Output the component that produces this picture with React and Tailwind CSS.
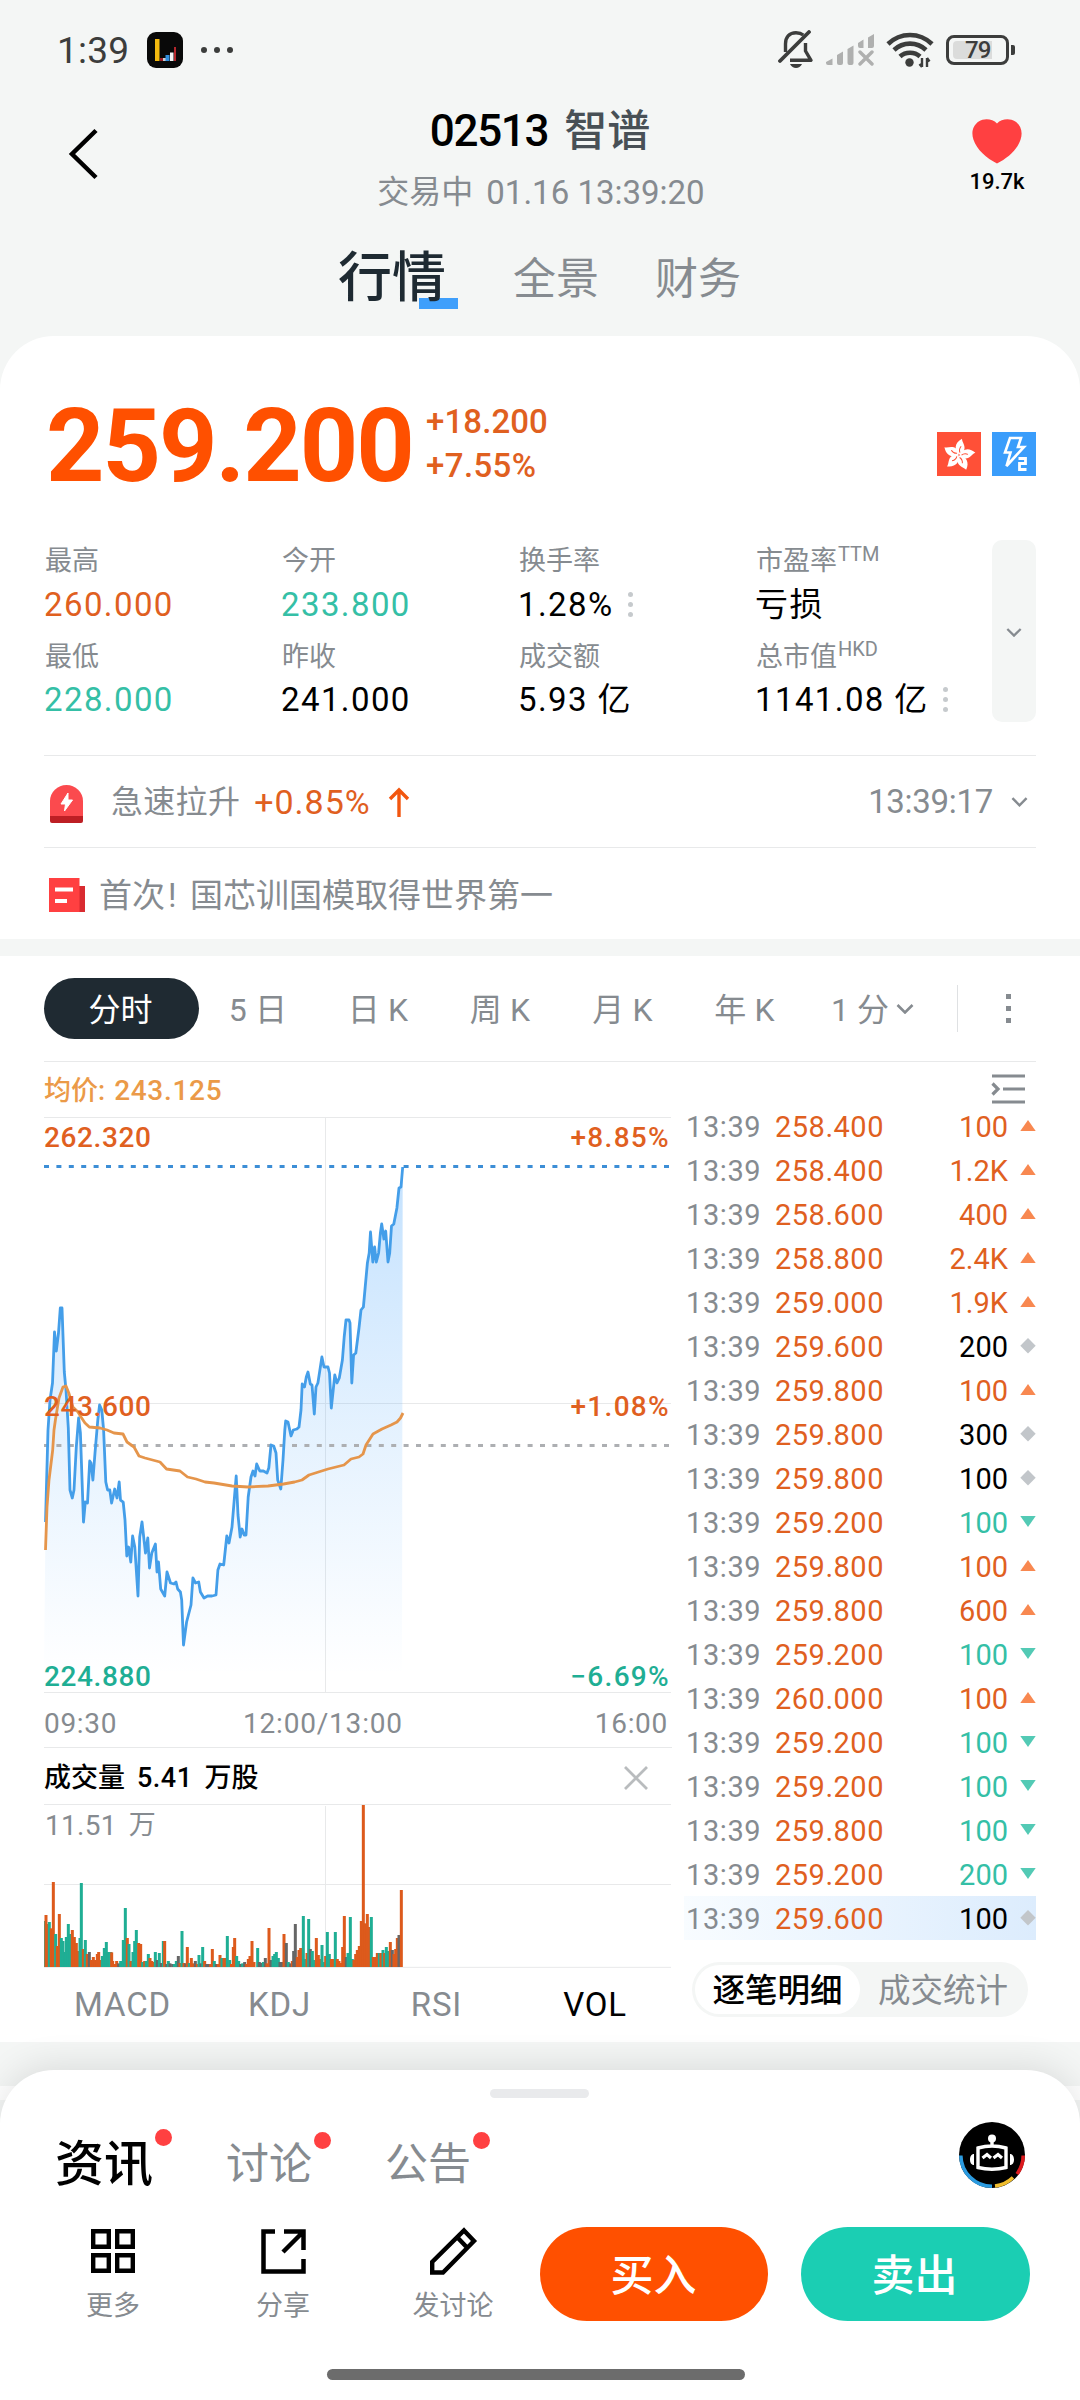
import { useState } from 'react';

const stats = [
  { label: '最高', value: '260.000', tone: 'text-[#e0601f]' },
  { label: '今开', value: '233.800', tone: 'text-[#35bfa6]' },
  { label: '换手率', value: '1.28%', tone: 'text-black', more: true },
  { label: '市盈率', sup: 'TTM', value: '亏损', tone: 'text-black' },
  { label: '最低', value: '228.000', tone: 'text-[#35bfa6]' },
  { label: '昨收', value: '241.000', tone: 'text-black' },
  { label: '成交额', value: '5.93 亿', tone: 'text-black' },
  { label: '总市值', sup: 'HKD', value: '1141.08 亿', tone: 'text-black', more: true },
];

const trades = [
  ['258.400', '100', 'up'],
  ['258.400', '1.2K', 'up'],
  ['258.600', '400', 'up'],
  ['258.800', '2.4K', 'up'],
  ['259.000', '1.9K', 'up'],
  ['259.600', '200', 'flat'],
  ['259.800', '100', 'up'],
  ['259.800', '300', 'flat'],
  ['259.800', '100', 'flat'],
  ['259.200', '100', 'down'],
  ['259.800', '100', 'up'],
  ['259.800', '600', 'up'],
  ['259.200', '100', 'down'],
  ['260.000', '100', 'up'],
  ['259.200', '100', 'down'],
  ['259.200', '100', 'down'],
  ['259.800', '100', 'down'],
  ['259.200', '200', 'down'],
  ['259.600', '100', 'flat'],
];

const periods = [
  { name: '5 日', width: 'w-[118px]' },
  { name: '日 K', width: 'w-[122px]' },
  { name: '周 K', width: 'w-[122px]' },
  { name: '月 K', width: 'w-[123px]' },
  { name: '年 K', width: 'w-[121px]' },
];

const indicators = ['MACD', 'KDJ', 'RSI', 'VOL'];

const pricePoints =
  '45.5,1522 48,1430 50,1400 52.5,1383 54.5,1332 56.3,1351 58.5,1333 60.3,1308 62,1308 64.3,1372 66,1390 68.3,1428 70,1490 72.3,1498 74,1490 76.3,1447 78.6,1418 80.4,1433 83.5,1522 85.3,1502 87.5,1503 89.7,1461 91,1463 92.9,1480 95,1453 97.8,1420 99.6,1405 101.8,1410 103.6,1430 105.8,1482 107.6,1490 109.8,1490 111.6,1503 114.7,1489 117,1498 119.2,1482 120.5,1500 123.2,1502 125,1520 126.8,1556 128.6,1547 130.8,1562 132.6,1536 134.8,1547 138,1596 139.7,1537 142,1522 145.5,1553 147.8,1538 149.5,1568 151.8,1553 155.4,1544 157,1572 158.5,1562 160.7,1589 164.7,1596 167,1572 170.5,1583 174,1584 176,1582 177.7,1589 180.4,1592 181.7,1600 183.5,1645 186.6,1622 191,1605 192.9,1578 195.5,1583 198.7,1582 200.4,1592 204,1598 207.6,1596 212,1596 216,1595 217.9,1570 220,1564 223.7,1565 226.8,1536 229,1543 232,1527 236.2,1476 238,1515 240.2,1537 242,1529 244.2,1535 246,1535 248.2,1497 251,1477 253,1471 255,1476 256.7,1464 259.8,1471 263.4,1471 267,1473 268.8,1468 271,1445 273.7,1446 276,1453 277.7,1480 280.8,1489 283,1460 284.8,1430 285.7,1421 288,1422 291,1436 293.3,1430 296.9,1429 299,1427 301,1410 302.2,1384 304.5,1387 306.3,1377 308,1372 310.3,1384 312,1385 314.3,1414 316,1387 317.9,1383 321.9,1357 324,1367 328,1367 329.5,1373 331.3,1408 334.8,1375 337,1383 339.3,1378 342.4,1360 344.2,1337 346,1320 349,1320 350,1323 351.8,1383 353.6,1355 355.8,1353 359,1328 361,1310 363.4,1307 365.2,1287 367.4,1263 369.2,1253 370.5,1232 372.8,1262 374.6,1247 376.3,1262 378.6,1253 380.4,1233 381.7,1224 383.9,1239 385.7,1231 388,1262 389.7,1253 391.5,1226 393.8,1224 396.9,1208 399,1188 401,1187 402.7,1167';

const averagePoints =
  '45.5,1550 47,1507 49,1480 52.7,1450 54,1430 55.4,1420 59,1398 63,1387 66,1386 68.8,1393 72.8,1407 78,1412 81,1417 85,1423 89.3,1427 100,1428 107,1430 114,1433 123,1434 127,1442 134,1447 139,1456 145,1458 160,1462 166.5,1469 180,1471 187.5,1477 196,1479 205,1482 214,1483 232,1486 248,1487 268,1486 283.5,1484 294.6,1482 302,1480 309,1475 328,1469 344,1465 351,1459 359,1457 363,1454 366,1445 373,1434 382,1429 391,1425 397,1422 400.5,1418 403,1413';

// x, top, tone (o = up, g = down, k = flat), three units to a pixel
const volumeBars =
  '33,363,g 36,345,o 40,372,o 46,366,g 52,385,o 58,246,o 65,402,g 70,438,o 76,342,o 82,414,g 87,423,g 92,456,g 97,411,g 103,372,g 109,402,g 115,390,o 121,411,o 127,429,o 132,453,o 138,414,g 142,249,g 148,447,o 154,420,g 160,462,o 166,456,k 172,480,o 178,471,o 184,480,o 190,462,o 194,456,o 200,480,o 205,468,g 211,444,g 217,426,g 223,456,g 230,456,g 233,457,o 236,483,o 242,492,o 248,483,o 254,490,k 260,483,g 268,420,g 274,324,g 280,414,o 285,432,g 291,483,o 297,456,g 302,423,g 307,390,g 314,429,o 320,432,o 326,486,g 332,483,o 337,483,g 343,462,g 348,474,o 353,483,o 358,486,o 364,456,g 370,480,k 376,459,g 382,489,k 388,423,g 392,423,o 398,492,k 403,483,g 408,490,k 416,492,k 421,492,g 427,483,g 433,468,k 438,489,o 444,393,g 450,489,o 455,490,k 460,441,o 466,489,g 472,474,o 478,490,o 484,483,k 490,492,o 495,465,g 501,490,k 506,441,g 512,483,o 518,492,k 524,492,k 530,492,o 535,447,o 541,483,g 547,492,k 553,492,o 558,465,o 564,474,g 570,474,o 575,474,o 580,408,g 587,480,g 592,492,o 598,441,o 602,414,o 608,468,g 614,483,g 620,492,k 626,490,g 632,486,k 638,492,o 643,477,o 648,468,o 654,423,o 660,486,o 671,444,g 676,486,k 682,489,k 688,486,g 694,474,k 699,490,o 705,384,o 711,480,k 717,468,g 722,462,g 727,456,g 733,474,g 738,486,k 744,486,k 750,402,o 757,429,k 763,486,g 770,490,k 775,483,o 779,453,k 784,372,k 790,471,o 795,450,o 800,444,o 808,348,g 814,477,g 819,459,o 824,357,g 829,447,k 835,453,g 841,480,g 847,414,o 853,465,o 858,477,o 864,435,g 870,486,g 875,468,o 880,396,g 886,462,g 892,477,o 898,477,o 904,396,g 910,477,o 915,483,o 920,489,o 926,441,o 931,348,o 937,471,k 942,459,g 949,351,g 955,477,g 960,480,o 965,462,o 970,450,o 976,438,o 982,363,o 988,15,o 994,370,o 1000,342,o 1005,381,o 1012,351,g 1018,471,o 1024,471,o 1030,459,o 1036,459,g 1041,459,o 1047,450,g 1052,459,o 1057,441,g 1063,453,g 1069,426,o 1075,450,k 1080,462,o 1085,447,o 1090,414,o 1095,405,k 1102,270,o'
    .split(' ')
    .map((bar) => bar.split(','));

const barFill = { o: '#dd5a1c', g: '#1fae94', k: '#666666' };

function ChevronDown({ className }) {
  return (
    <svg className={className} viewBox="0 0 18 10" fill="none" stroke="#868b90" strokeWidth="2.6">
      <path d="M1.5 1 9 8.5 16.5 1" />
    </svg>
  );
}

function StatusBar() {
  return (
    <div className="flex h-[100px] items-center pl-[57px] text-[#3c3d3c]">
      <span className="w-[90px] pt-px text-[37px] leading-none tracking-[0.2px]">1:39</span>
      <svg className="h-9 w-9" viewBox="0 0 36 36">
        <rect width="36" height="36" rx="9" fill="#090909" />
        <path d="M8 7h4.500v22H8z" fill="#f3b90f" />
        <path d="M13 26h3v3h-3z" fill="#9a1c22" />
        <path d="M16 26h3v3h-3z" fill="#c9ced4" />
        <path d="M18.500 23h4v6h-4z" fill="#2f8fe0" />
        <path d="M23 20.500h3.500V29H23z" fill="#f2f4f6" />
        <path d="M27 15h2v14h-2z" fill="#b3262c" />
      </svg>
      <div className="ml-[18px] flex gap-[7px]">
        <i className="h-[6px] w-[6px] rounded-full bg-[#3c3d3c]" />
        <i className="h-[6px] w-[6px] rounded-full bg-[#3c3d3c]" />
        <i className="h-[6px] w-[6px] rounded-full bg-[#3c3d3c]" />
      </div>
      <svg className="ml-auto h-[40px] w-[36px]" viewBox="0 0 36 40" fill="none" stroke="#3c3d3c">
        <path d="M2 31 31 2" strokeWidth="3.8" strokeLinecap="round" />
        <path d="M7.5 22V14C7.5 7 11.5 2.7 18 2.7c3 0 5.5.8 7.3 2.3" strokeWidth="3.4" />
        <path d="M27.5 13v8l5.5 9.3H12" strokeWidth="3.4" strokeLinejoin="round" />
        <path d="M12 34h12c-1.300 2.500-3.500 4-6 4s-4.700-1.500-6-4z" fill="#3c3d3c" stroke="none" />
      </svg>
      <svg className="ml-[12px] h-[32px] w-[50px]" viewBox="0 0 50 32" fill="#afb0af">
        <path d="M0 28 6.500 24.500V31H2a2 2 0 0 1-2-2zM11 21l6-3.500V29a2 2 0 0 1-2 2h-2a2 2 0 0 1-2-2zM21.500 15l6-3.500V29a2 2 0 0 1-2 2h-2a2 2 0 0 1-2-2zM32 9l5.500-3.500V14H34a2 2 0 0 1-2-2zM42 3.500l6-3.500v12a2 2 0 0 1-2 2h-4z" />
        <path d="m34 18 12 12m0-12L34 30" stroke="#afb0af" strokeWidth="3.4" strokeLinecap="round" />
      </svg>
      <svg className="ml-[10px] h-[36px] w-[48px]" viewBox="0 0 48 36" fill="none" stroke="#3c3d3c" strokeWidth="4.6">
        <path d="M2 12c12.500-12 31.500-12 44 0" />
        <path d="M8 18c9-8.500 23-8.500 32 0" />
        <path d="M14 24.500c5.500-5 14.500-5 20 0" />
        <circle cx="23.500" cy="30.500" r="4.200" fill="#3c3d3c" stroke="none" />
        <path d="M36 35v-9m5 9v-9M33.500 32l2.500 3M41 26l2.500 3.500" strokeWidth="2.400" />
      </svg>
      <div className="ml-[12px] flex h-[30px] w-[63px] items-center rounded-[8px] border-[3px] border-[#3c3d3c] p-[4px]">
        <div className="flex h-[18px] w-[39px] items-center rounded-l-[4px] bg-[#dbdcdb] pl-[12px] text-[24px] leading-none font-medium tracking-[-1px]">
          79
        </div>
      </div>
      <i className="mr-[65px] ml-[2px] h-[10px] w-[4px] rounded-r-[2px] bg-[#3c3d3c]" />
    </div>
  );
}

function Header() {
  return (
    <header className="h-[336px]">
      <StatusBar />
      <div className="flex h-[134px]">
        <button type="button" className="w-[167px] pl-[68px]" aria-label="返回">
          <svg className="-mt-[26px] h-[52px] w-[32px]" viewBox="0 0 32 52" fill="none" stroke="#000" strokeWidth="4.500">
            <path d="M28 2.500 4 26l24 23.500" />
          </svg>
        </button>
        <div className="flex flex-1 flex-col items-center">
          <h1 className="flex h-[62px] items-center text-[43px] leading-none font-medium">
            <span className="mr-[16px] text-[44px] tracking-[-1.300px]">02513</span>
            <span className="pt-px text-[#485056]">智谱</span>
          </h1>
          <p className="flex h-[60px] items-center pl-[2px] text-[32px] leading-none text-[#868b90]">
            交易中<span className="ml-[13px] text-[33px]">01.16 13:39:20</span>
          </p>
        </div>
        <div className="flex w-[167px] flex-col items-center pt-[18px] pl-px">
          <svg className="h-[46px] w-[52px]" viewBox="0 0 54 47" preserveAspectRatio="none" fill="#ff4041">
            <path d="M27 5.500C31.500 1 40 0 46 3.500c6 4 8 11 5.500 18.500C48 32.500 38 41 27 46.500 16 41 6 32.500 2.500 22 0 14.500 2 7.500 8 3.500 14 0 22.500 1 27 5.500z" />
          </svg>
          <span className="mt-[7px] text-[22px] leading-none font-medium">19.7k</span>
        </div>
      </div>
      <nav className="flex h-[90px] items-center pl-[338px] leading-none text-[#868b90]">
        <span className="relative isolate text-[54px] font-medium text-[#1e2a32]">
          行情
          <i className="absolute right-[-12px] bottom-[-3px] -z-10 h-[11px] w-[39px] bg-[#3f9ffb]" />
        </span>
        <span className="ml-[67px] text-[43px]">全景</span>
        <span className="ml-[56px] text-[43px]">财务</span>
      </nav>
    </header>
  );
}

function MoreDots() {
  return (
    <span className="ml-[14px] flex flex-col gap-[5px]">
      <i className="h-[5px] w-[5px] rounded-full bg-[#c6cacd]" />
      <i className="h-[5px] w-[5px] rounded-full bg-[#c6cacd]" />
      <i className="h-[5px] w-[5px] rounded-full bg-[#c6cacd]" />
    </span>
  );
}

function Quote() {
  return (
    <section className="h-[603px] rounded-t-[54px] bg-white px-[44px] pt-[60px]">
      <div className="flex h-[100px] items-center">
        <span className="w-[382px] pl-[2px] text-[102px] leading-none font-bold tracking-[-2px] text-[#ff5000]">
          259.200
        </span>
        <div className="-mt-[5px] flex flex-col gap-[11px] text-[33px] leading-[33px] font-medium text-[#e0601f]">
          <span className="tracking-[0.1px]">+18.200</span>
          <span className="tracking-[0.4px]">+7.55%</span>
        </div>
        <svg className="mt-[16px] ml-auto h-[44px] w-[44px]" viewBox="0 0 44 44">
          <rect width="44" height="44" fill="#ff5037" />
          {[12, 84, 156, 228, 300].map((angle) => (
            <g key={angle} transform={`rotate(${angle} 22 23)`}>
              <path d="M22 22.500c-6-3.500-7-10.500-.5-16 .8 3.500 5.500 6 4.500 11-.5 2.500-2 4-4 5z" fill="#fff" />
              <path d="M22.500 20.500c-1.500-2-1.500-4-.2-6.500" fill="none" stroke="#ff5037" strokeWidth="1" />
            </g>
          ))}
        </svg>
        <svg className="mt-[16px] ml-[11px] h-[44px] w-[44px]" viewBox="0 0 44 44" fill="none" stroke="#fff">
          <rect width="44" height="44" fill="#3a9dfb" stroke="none" />
          <path d="M18 6h11l-3 9h6L14.500 34l4-13.500H13z" strokeWidth="2.600" />
          <path d="M26.500 26.500h7v5h-6v6h7" strokeWidth="2.800" />
        </svg>
      </div>
      <div className="mt-[44px] flex h-[182px]">
        <div className="grid flex-1 grid-cols-[237px_237px_237px_237px] gap-y-[9px]">
          {stats.map((item) => (
            <div key={item.label} className="h-[86px] leading-none">
              <div className="flex h-[42px] items-center pt-px pl-px text-[27px] text-[#868b90]">
                {item.label}
                {item.sup && <sup className="top-[-8px] ml-px text-[20px] leading-none">{item.sup}</sup>}
              </div>
              <div className={`flex h-[44px] items-center text-[33px] tracking-[1.400px] whitespace-nowrap ${item.tone}`}>
                {item.value}
                {item.more && <MoreDots />}
              </div>
            </div>
          ))}
        </div>
        <button
          type="button"
          className="-ml-[44px] flex w-[44px] items-center justify-center rounded-[10px] bg-[#f4f6f5]"
          aria-label="展开"
        >
          <ChevronDown className="mt-[2px] h-[9px] w-[16px]" />
        </button>
      </div>
      <div className="mt-[33px] flex h-[92px] items-center border-t border-[#e8e9ea] text-[32px] leading-none text-[#868b90]">
        <svg className="mt-[4px] ml-[6px] h-[38px] w-[33px]" viewBox="0 0 33 38">
          <path d="M0 31V16a16.500 16 0 0 1 33 0v15z" fill="#fb4a4e" />
          <path d="M0 31h33v5a2 2 0 0 1-2 2H2a2 2 0 0 1-2-2z" fill="#bd1f24" />
          <path d="m18 8-7 11h4.500l-1 7 8-11H18z" fill="#fff" stroke="#fff" strokeLinejoin="round" />
        </svg>
        <span className="ml-[28px] pt-px tracking-[0.3px]">急速拉升</span>
        <span className="ml-[14px] text-[34px] tracking-[1px] text-[#e0601f]">+0.85%</span>
        <svg className="ml-[17px] h-[30px] w-[22px]" viewBox="0 0 22 30" fill="none" stroke="#f2560f" strokeWidth="3.400">
          <path d="M11 30V3M2 12l9-9 9 9" />
        </svg>
        <span className="ml-auto text-[33px] tracking-[-0.3px]">13:39:17</span>
        <ChevronDown className="mr-[8px] ml-[18px] h-[10px] w-[17px]" />
      </div>
      <div className="flex h-[92px] items-center border-t border-[#e8e9ea] text-[33px] leading-none text-[#868b90]">
        <svg className="mt-[2px] ml-[5px] h-[34px] w-[36px]" viewBox="0 0 36 34">
          <path d="M28 8h8v26h-8z" fill="#d92b30" />
          <path d="M0 0h30.500v34H0z" fill="#ff4041" />
          <path d="M6 9.500h18v4H6zM6 21h12v4H6z" fill="#fff" />
        </svg>
        <span className="ml-[14px] pt-[3px]">首次</span>
        <span className="w-[25px] pt-[3px] pl-[3px]">!</span>
        <span className="pt-[3px]">国芯训国模取得世界第一</span>
      </div>
    </section>
  );
}

function PeriodTabs({ period, onChange }) {
  return (
    <nav className="flex h-[105px] items-center text-[32px] leading-none text-[#868b90]">
      <button
        type="button"
        onClick={() => onChange('分时')}
        className="h-[61px] w-[155px] rounded-full bg-[#1f2a32] pt-[3px] pr-[2px] text-white"
      >
        分时
      </button>
      {periods.map(({ name, width }) => (
        <button
          key={name}
          type="button"
          onClick={() => onChange(name)}
          className={`pt-[2px] text-center tracking-[0.2px] ${width} ${period === name ? 'text-black' : ''}`}
        >
          {name}
        </button>
      ))}
      <span className="ml-[26px] pt-[2px] whitespace-nowrap">1 分</span>
      <ChevronDown className="ml-[7px] h-[10px] w-[18px]" />
      <i className="ml-[43px] h-[47px] w-px bg-[#dfe1e3]" />
      <span className="ml-[48px] flex flex-col gap-[7px]">
        <i className="h-[5px] w-[5px] bg-[#868b90]" />
        <i className="h-[5px] w-[5px] bg-[#868b90]" />
        <i className="h-[5px] w-[5px] bg-[#868b90]" />
      </span>
    </nav>
  );
}

function PriceChart() {
  return (
    <div className="relative h-[576px] w-[628px] text-[28px] leading-none tracking-[0.6px]">
      <svg className="h-[576px] w-[628px]" viewBox="44 1117 628 576" fill="none">
        <defs>
          <linearGradient id="priceFill" gradientUnits="userSpaceOnUse" x1="0" y1="1167" x2="0" y2="1675">
            <stop offset="0" stopColor="#3a9dfb" stopOpacity="0.3" />
            <stop offset="0.5" stopColor="#3a9dfb" stopOpacity="0.14" />
            <stop offset="1" stopColor="#3a9dfb" stopOpacity="0" />
          </linearGradient>
        </defs>
        <path d="M44 1117.500h627M44 1403.500h627M44 1692.500h627M325.500 1117v576" stroke="#e8e9ea" />
        <polygon points={`44,1675 ${pricePoints} 402,1675`} fill="url(#priceFill)" />
        <path d="M44 1445.500h625" stroke="#adafb2" strokeWidth="3" strokeDasharray="5 7.400" />
        <path d="M44 1166.500h625" stroke="#3c8ed6" strokeWidth="3" strokeDasharray="5 7.400" />
        <polyline points={pricePoints} stroke="#449ee9" strokeWidth="2.800" strokeLinejoin="round" />
        <polyline points={averagePoints} stroke="#e5954b" strokeWidth="2.800" strokeLinejoin="round" />
      </svg>
      <div className="absolute inset-x-0 top-[7px] flex justify-between pr-[2px] font-medium text-[#e0601f]">
        <span>262.320</span>
        <span className="tracking-[1.300px]">+8.85%</span>
      </div>
      <div className="absolute inset-x-0 top-[276px] flex justify-between pr-[2px] font-medium text-[#e0601f]">
        <span>243.600</span>
        <span className="tracking-[1.300px]">+1.08%</span>
      </div>
      <div className="absolute inset-x-0 top-[546px] flex justify-between pr-[2px] font-medium text-[#1fae94]">
        <span>224.880</span>
        <span className="tracking-[1.300px]">−6.69%</span>
      </div>
    </div>
  );
}

function VolumeChart() {
  return (
    <div className="relative h-[164px] w-[628px]">
      <svg className="h-[164px] w-[628px]" viewBox="30 12 1884 492" fill="none">
        <path d="M30 13.500h1881M30 253.500h1881M30 502h1881M874.500 18v492" stroke="#e8e9ea" strokeWidth="3" />
        {volumeBars.map(([x, top, tone]) => (
          <rect key={x} x={x - 4.500} y={top} width="9" height={501 - top} fill={barFill[tone]} />
        ))}
      </svg>
      <div className="absolute top-[8px] left-[1px] flex gap-[12px] text-[27px] leading-none tracking-[0.3px] text-[#868b90]">
        <span className="text-[28px]">11.51</span>
        <span>万</span>
      </div>
    </div>
  );
}

function TradeMark({ side }) {
  return (
    <svg className="ml-[12px] h-[16px] w-[16px]" viewBox="0 0 16 16">
      {side === 'up' && <path d="M8 2 15.700 13H.3z" fill="#f88850" />}
      {side === 'down' && <path d="M8 13 .3 2h15.400z" fill="#53cab5" />}
      {side === 'flat' && <path d="m8 0 7.700 7.700L8 15.400.3 7.700z" fill="#c2c6ca" />}
    </svg>
  );
}

const quantityTone = { up: 'text-[#e0601f]', down: 'text-[#35bfa6]', flat: 'text-black' };

function TradeList() {
  return (
    <div className="ml-[12px] w-[352px]">
      <div className="flex h-[42px] items-center justify-end">
        <svg className="mt-[11px] mr-[11px] h-[30px] w-[34px]" viewBox="0 0 34 30" fill="none" stroke="#868b90" strokeWidth="3.200">
          <path d="M1 2h33M12 15h22M1 28h33M1.500 9.500l5.500 5.500-5.500 5.500" />
        </svg>
      </div>
      {trades.map(([price, quantity, side], index) => (
        <div
          key={index}
          className={`flex h-[44px] items-center text-[29px] leading-none ${
            index === trades.length - 1 ? 'bg-linear-to-r from-[#f8fcff] to-[#dcecfd]' : ''
          }`}
        >
          <span className="w-[91px] pt-[3px] pl-[2px] tracking-[0.6px] text-[#868b90]">13:39</span>
          <span className="pt-[3px] tracking-[0.500px] text-[#e0601f]">{price}</span>
          <span className={`ml-auto pt-[3px] ${quantityTone[side]}`}>{quantity}</span>
          <TradeMark side={side} />
        </div>
      ))}
      <div className="mt-[22px] ml-[8px] flex h-[55px] w-[336px] items-center rounded-full bg-[#f4f6f5] p-[3px] text-[32.500px] leading-none text-[#868b90]">
        <span className="flex h-[49px] w-[165px] items-center justify-center rounded-full bg-white pt-[3px] font-medium text-black">
          逐笔明细
        </span>
        <span className="flex flex-1 items-center justify-center pt-[3px] pl-px">成交统计</span>
      </div>
    </div>
  );
}

function BottomSheet() {
  return (
    <footer className="absolute inset-x-0 bottom-0 h-[330px] rounded-t-[54px] bg-white shadow-[0_-4px_36px_rgba(0,0,0,0.11)]">
      <div className="flex h-[37px] justify-center pt-[19px] pr-px">
        <i className="h-[9px] w-[99px] rounded-full bg-[#e9eaec]" />
      </div>
      <div className="flex h-[112px] items-center pt-[2px] pl-[55px] leading-none text-[#868b90]">
        <span className="relative text-[49px] font-medium text-black">
          资讯
          <i className="absolute top-[-11px] right-[-19px] h-[17px] w-[17px] rounded-full bg-[#ff4041]" />
        </span>
        <span className="relative ml-[73px] text-[43px]">
          讨论
          <i className="absolute top-[-11px] right-[-19px] h-[17px] w-[17px] rounded-full bg-[#ff4041]" />
        </span>
        <span className="relative ml-[73px] text-[43px]">
          公告
          <i className="absolute top-[-11px] right-[-19px] h-[17px] w-[17px] rounded-full bg-[#ff4041]" />
        </span>
        <svg className="mr-[55px] mb-[18px] ml-auto h-[66px] w-[66px]" viewBox="0 0 66 66" fill="none">
          <circle cx="33" cy="33" r="33" fill="#000" />
          <path d="M1.800 33.500A31.200 31.200 0 0 0 33 64.200" stroke="#2b9be0" strokeWidth="3.600" />
          <path d="M36 64a31.200 31.200 0 0 0 18-8.500" stroke="#f0bd2d" strokeWidth="3.600" />
          <path d="M58 52a31.200 31.200 0 0 0 6.200-18.500" stroke="#dc1a1d" strokeWidth="3.600" />
          <circle cx="33" cy="16.500" r="4" fill="#fff" />
          <path d="M33 18v6M19 26q14-4 28 0v19.500q-14 3.500-28 0z" stroke="#fff" strokeWidth="3.400" />
          <path d="m23.500 36 4.500-3.500 4 3.500m2.500 0 4.500-3.500 4 3.500" stroke="#fff" strokeWidth="3.200" />
          <path d="M15 32v11c-2.700 0-4-2.500-4-5.500s1.300-5.500 4-5.500zM51 32v11c2.700 0 4-2.500 4-5.500S53.700 32 51 32z" fill="#fff" />
        </svg>
      </div>
      <div className="mt-[8px] flex h-[94px] pl-[28px] text-[27px] leading-none text-[#868b90]">
        <div className="flex w-[170px] flex-col items-center pt-[2px]">
          <svg className="h-[44px] w-[44px]" viewBox="0 0 44 44" fill="none" stroke="#000" strokeWidth="4.400">
            <path d="M2.200 2.200h15.600v15.600H2.200zM26.200 2.200h15.600v15.600H26.200zM2.200 26.200h15.600v15.600H2.200zM26.200 26.200h15.600v15.600H26.200z" />
          </svg>
          <span className="mt-[20px]">更多</span>
        </div>
        <div className="flex w-[170px] flex-col items-center pt-[2px]">
          <svg className="h-[45px] w-[45px]" viewBox="0 0 45 45" fill="none" stroke="#000" strokeWidth="4.500">
            <path d="M14 2.500H2.500v40h40V30M23 2.500h19.500V21M42 3 22 23" />
          </svg>
          <span className="mt-[19px]">分享</span>
        </div>
        <div className="flex w-[170px] flex-col items-center">
          <svg className="h-[49px] w-[49px]" viewBox="0 0 49 49" fill="none" stroke="#000" strokeWidth="4.400">
            <path d="M35 3.500 45 14 14 45.500H3.200V35zM28 10l10 10.500" />
          </svg>
          <span className="mt-[17px]">发讨论</span>
        </div>
        <button
          type="button"
          className="ml-[2px] w-[228px] rounded-full bg-[#ff5000] pt-[5px] pr-px text-[43px] font-medium text-white"
        >
          买入
        </button>
        <button
          type="button"
          className="ml-[33px] w-[229px] rounded-full bg-[#1bceb3] pt-[5px] pr-[2px] text-[43px] font-medium text-white"
        >
          卖出
        </button>
      </div>
      <div className="mt-[48px] ml-[327px] h-[11px] w-[418px] rounded-full bg-[#6c6c6c]" />
    </footer>
  );
}

export default function App() {
  const [period, setPeriod] = useState('分时');
  const [indicator, setIndicator] = useState('VOL');

  return (
    <div className="relative h-[2400px] w-[1080px] overflow-hidden bg-[#f4f6f5] font-['Roboto','Noto_Sans_CJK_SC',sans-serif] text-black">
      <Header />
      <Quote />
      <section className="mt-[17px] h-[1086px] bg-white px-[44px]">
        <PeriodTabs period={period} onChange={setPeriod} />
        <div className="flex border-t border-[#e8e9ea]">
          <div className="w-[628px]">
            <div className="flex h-[55px] items-center pt-[3px] text-[27px] leading-none font-medium text-[#eb9a48]">
              均价:<span className="ml-[9px] text-[28px] tracking-[0.700px]">243.125</span>
            </div>
            <PriceChart />
            <div className="flex h-[55px] items-center justify-between border-b border-[#e8e9ea] pt-[8px] pr-[4px] text-[28px] leading-none text-[#868b90]">
              <span className="w-[199px] tracking-[0.7px]">09:30</span>
              <span className="flex-1 tracking-[0.800px]">12:00/13:00</span>
              <span className="tracking-[0.7px]">16:00</span>
            </div>
            <div className="flex h-[56px] items-center pt-[4px] text-[27px] leading-none font-medium">
              <span>成交量</span>
              <span className="mx-[12px] tracking-[0.500px]">5.41</span>
              <span>万股</span>
              <svg className="mr-[24px] ml-auto h-[24px] w-[24px]" viewBox="0 0 24 24" stroke="#b9bcbe" strokeWidth="2.800">
                <path d="m1 1 22 22M23 1 1 23" />
              </svg>
            </div>
            <VolumeChart />
            <div className="grid h-[74px] grid-cols-4 pb-[2px] text-[33px] leading-none text-[#868b90]">
              {indicators.map((name) => (
                <button
                  key={name}
                  type="button"
                  onClick={() => setIndicator(name)}
                  className={`tracking-[0.800px] ${indicator === name ? 'pl-[3px] text-black' : ''}`}
                >
                  {name}
                </button>
              ))}
            </div>
          </div>
          <TradeList />
        </div>
      </section>
      <div className="mt-[44px] h-[14px] bg-white" />
      <BottomSheet />
    </div>
  );
}
